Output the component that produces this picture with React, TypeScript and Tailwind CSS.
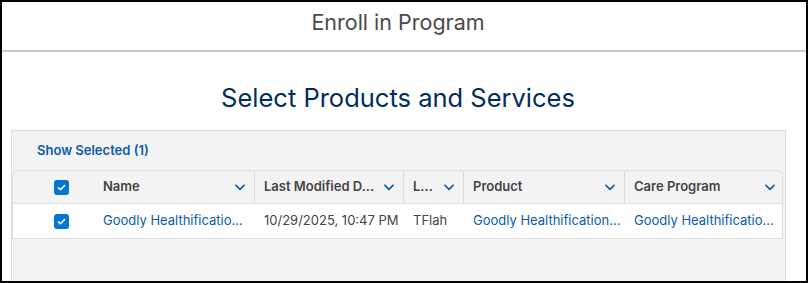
import React from 'react';

const font = { fontFamily: 'Inter, "Noto Sans", "Liberation Sans", sans-serif' };

function Chevron() {
  return (
    <svg width="14" height="14" viewBox="0 0 24 24" fill="none" stroke="#0b5cab" strokeWidth="3" strokeLinecap="round" strokeLinejoin="round">
      <path d="M5 9l7 7 7-7" />
    </svg>
  );
}

function Check() {
  return (
    <div className="w-[15px] h-[15px] rounded-[3px] bg-[#0176d3] flex items-center justify-center">
      <svg width="9" height="9" viewBox="0 0 24 24" fill="none" stroke="white" strokeWidth="4" strokeLinecap="round" strokeLinejoin="round">
        <path d="M4 13l5 5L20 7" />
      </svg>
    </div>
  );
}

const cols = 'grid grid-cols-[76px_166px_149px_60px_161px_159px]';

const headers = ['Name', 'Last Modified D...', 'L...', 'Product', 'Care Program'];

export default function App() {
  return (
    <div className="w-[808px] h-[283px] border-2 border-black bg-white overflow-hidden flex flex-col" style={font}>
      <div className="h-[50px] flex items-center justify-center pr-[12px] border-b-2 border-[#c9c9c9] shrink-0">
        <span className="text-[21.5px] text-[#4a4a4a] -mt-[8px]">Enroll in Program</span>
      </div>
      <div className="h-[78px] flex items-center justify-center pr-[12px] shrink-0">
        <span className="text-[25.5px] text-[#032d60] mt-[14px]">Select Products and Services</span>
      </div>
      <div className="ml-[9px] mr-[20px] flex-1 bg-[#f3f3f3] border border-[#dddddd] border-b-0 flex flex-col">
        <div className="h-[39px] flex items-center pl-[25px] pt-[1px]">
          <span className="text-[13px] font-semibold text-[#0b5cab]">Show Selected (1)</span>
        </div>
        <div className="mr-[2px] rounded-t-[6px] border-t border-x border-[#e0e0e0] overflow-hidden">
          <div className={`${cols} h-[33px] bg-[#f3f3f3] border-b border-[#e0e0e0]`}>
            <div className="flex items-center justify-center pl-[20px]">
              <Check />
            </div>
            {headers.map((h, i) => (
              <div key={h} className={`flex items-center justify-between pl-[9px] pr-[7px] ${i < headers.length - 1 ? 'border-r border-[#dcdcdc]' : ''}`}>
                <span className={`text-[13px] font-semibold text-[#444444] whitespace-nowrap ${i === 0 ? 'pl-[5px]' : ''}`}>{h}</span>
                <Chevron />
              </div>
            ))}
          </div>
          <div className={`${cols} h-[35px] bg-white border-b border-[#e0e0e0] text-[13px]`}>
            <div className="flex items-center justify-center pl-[20px]">
              <Check />
            </div>
            <div className="flex items-center pl-[14px] text-[#0b5cab] whitespace-nowrap">Goodly Healthificatio...</div>
            <div className="flex items-center pl-[9px] text-[#444444] whitespace-nowrap">10/29/2025, 10:47 PM</div>
            <div className="flex items-center pl-[9px] text-[#444444]">TFlah</div>
            <div className="flex items-center pl-[9px] text-[#0b5cab] whitespace-nowrap">Goodly Healthification...</div>
            <div className="flex items-center pl-[9px] text-[#0b5cab] whitespace-nowrap">Goodly Healthificatio...</div>
          </div>
        </div>
      </div>
    </div>
  );
}
